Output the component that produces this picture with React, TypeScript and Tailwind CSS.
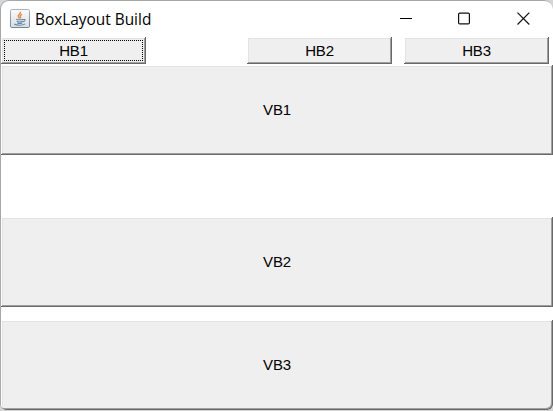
import React from 'react';

const bevel =
  'relative flex shrink-0 items-center justify-center bg-[#efefef] text-[15px] tracking-[-0.2px] leading-none text-black shadow-[inset_-1px_-1px_0_#696969,inset_1px_1px_0_#fff,inset_-2px_-2px_0_#a0a0a0,inset_2px_2px_0_#e3e3e3]';

function PushButton({ label, className, focused = false }: { label: string; className: string; focused?: boolean }) {
  return (
    <button type="button" className={`${bevel} ${className}`}>
      <span>{label}</span>
      {focused && (
        <svg className="absolute inset-0 h-full w-full" viewBox="0 0 145 27" fill="none" shapeRendering="crispEdges">
          <path d="M3 3.5H142M3 23.5H142M3.5 5V23M141.5 5V23" stroke="#000" strokeDasharray="1 1" />
        </svg>
      )}
    </button>
  );
}

function JavaIcon() {
  return (
    <svg width="20" height="19" viewBox="0 0 20 19" fill="none">
      <defs>
        <linearGradient id="face" x1="0" y1="0" x2="0" y2="1">
          <stop offset="0" stopColor="#fafafa" />
          <stop offset="1" stopColor="#d9dee2" />
        </linearGradient>
        <linearGradient id="edge" x1="0" y1="0" x2="0" y2="1">
          <stop offset="0" stopColor="#a9b4be" />
          <stop offset="1" stopColor="#6f8496" />
        </linearGradient>
      </defs>
      <rect x="0.5" y="0.5" width="19" height="18" rx="1.3" fill="url(#face)" stroke="url(#edge)" />
      <path d="M10.4 2.7C11.4 5 7 5.6 8.3 7.7L9.5 9.5M12.1 5.3C9.5 6.3 10.2 7.1 10.6 8.2L10 9.5" stroke="#e78a43" strokeWidth="1.4" />
      <path d="M6.2 10.2C7.5 11 11.5 11 13.2 10.2M13 10.7C16 9.8 15.5 12.4 12.7 12.9M6.7 12.3C8.3 13 11 13 12.7 12.3M7.3 14C8.8 14.6 10.8 14.6 12.2 14M4.3 15C6.3 16.7 12.8 16.7 15.2 14.9" stroke="#6086a5" strokeWidth="1.1" />
    </svg>
  );
}

export default function App() {
  return (
    <div className="h-[411px] w-[553px] overflow-hidden bg-[#d5d5d5] font-['Liberation_Sans',Arial,sans-serif]">
      <div className="flex h-[410px] w-[553px] flex-col overflow-hidden rounded-t-[9px] rounded-b-[6px] border-t border-l border-[#a8a8a8] bg-white">
        <header className="flex h-9 shrink-0 items-center pb-px pl-[9px]">
          <JavaIcon />
          <h1 className="ml-[5px] w-[120px] whitespace-nowrap pt-0.5 font-['Open_Sans',sans-serif] text-[15.4px] leading-[19px] text-black">
            BoxLayout Build
          </h1>
          <div className="ml-auto flex items-center gap-[46px] pr-[23px]">
            <svg width="12" height="13" viewBox="0 0 12 13" shapeRendering="crispEdges">
              <path d="M0 6.5H12" stroke="#000" />
            </svg>
            <svg width="12" height="13" viewBox="0 0 12 13" fill="none">
              <rect x="0.6" y="1.1" width="10.8" height="10.8" rx="1.2" stroke="#111" strokeWidth="1.2" />
            </svg>
            <svg className="ml-px" width="13" height="13" viewBox="0 0 13 13" fill="none">
              <path d="M.5 .7L12.3 12.5M12.3 .7L.5 12.5" stroke="#111" strokeWidth="1.2" />
            </svg>
          </div>
        </header>
        <div className="flex h-7 shrink-0 items-start">
          <PushButton label="HB1" className="h-[27px] w-[145px]" focused />
          <PushButton label="HB2" className="ml-[101px] h-[27px] w-[145px]" />
          <PushButton label="HB3" className="ml-3 h-[27px] w-[145px]" />
        </div>
        <main className="flex flex-col">
          <PushButton label="VB1" className="h-[90px] w-full pb-0.5" />
          <PushButton label="VB2" className="mt-[62px] h-[90px] w-full pb-0.5" />
          <PushButton label="VB3" className="mt-[13px] h-[90px] w-full rounded-b-[5px] pb-0.5" />
        </main>
      </div>
    </div>
  );
}
